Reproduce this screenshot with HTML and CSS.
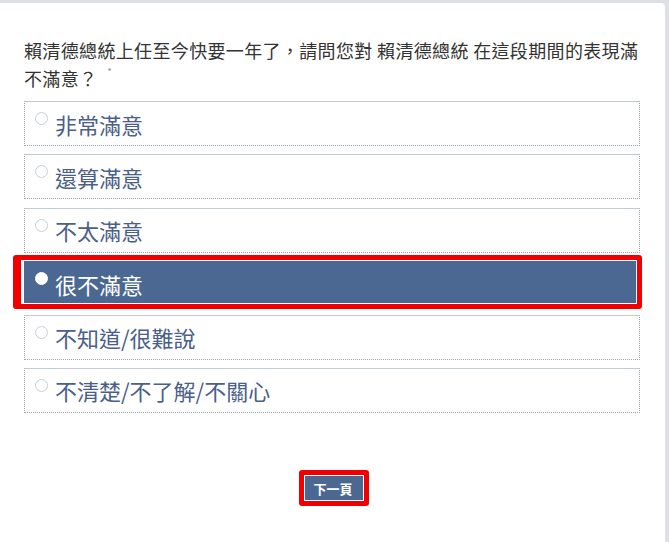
FILE: index.html
```html
<!DOCTYPE html>
<html lang="zh-Hant">
<head>
<meta charset="utf-8">
<title>問卷</title>
<link rel="stylesheet" href="styles.css">
</head>
<body>
<div class="page">
  <div class="question">賴清德總統上任至今快要一年了，請問您對 賴清德總統 在這段期間的表現滿不滿意？<span class="req">*</span></div>
  <div class="options">
    <div class="option"><span class="radio"></span><span class="label">非常滿意</span></div>
    <div class="option"><span class="radio"></span><span class="label">還算滿意</span></div>
    <div class="option"><span class="radio"></span><span class="label">不太滿意</span></div>
    <div class="option selected"><span class="radio"></span><span class="label">很不滿意</span><span class="mark mark-option"></span></div>
    <div class="option"><span class="radio"></span><span class="label">不知道/很難說</span></div>
    <div class="option"><span class="radio"></span><span class="label">不清楚/不了解/不關心</span></div>
  </div>
  <div class="actions">
    <button class="next">下一頁<span class="mark mark-button"></span></button>
  </div>
</div>
</body>
</html>
```
FILE: styles.css
```css
html, body {
  margin: 0;
  padding: 0;
  height: 100%;
}
body {
  background: #dde1e5;
  font-family: "Noto Sans CJK TC", "Noto Sans", sans-serif;
}
.page {
  box-sizing: border-box;
  margin: 3px 4px 0 0;
  height: calc(100% - 3px);
  background: #ffffff;
  border-top-right-radius: 4px;
  padding: 33px 25px 0 24px;
}
.question {
  font-size: 18px;
  line-height: 28px;
  color: #333333;
  letter-spacing: 0.35px;
  margin-right: -8px;
}
.req {
  display: inline-block;
  font-size: 9px;
  line-height: 9px;
  color: #888888;
  margin-left: 10px;
  margin-top: 3px;
  vertical-align: top;
  letter-spacing: 0;
}
.options {
  display: flex;
  flex-direction: column;
  gap: 8.4px;
  margin-top: 9px;
}
.option {
  position: relative;
  box-sizing: border-box;
  height: 45px;
  border: 1px dotted #9aa3ad;
  border-top: 1px solid #c3cbd3;
  display: flex;
  align-items: center;
  padding-left: 10px;
}
.radio {
  align-self: flex-start;
  margin-top: 10px;
  width: 11px;
  height: 11px;
  border: 1px solid #c8cfd8;
  border-radius: 50%;
  background: #fff;
  flex: none;
}
.label {
  margin-left: 7px;
  font-size: 22px;
  color: #4a6088;
  line-height: 30px;
  margin-top: 0;
}
.option.selected {
  background: #4b6893;
  border-color: #4b6893;
}
.option.selected .radio {
  background: #ffffff;
  border-color: #ffffff;
}
.option.selected .label {
  color: #ffffff;
}
.mark {
  position: absolute;
  box-sizing: border-box;
  border: 5px solid #f00000;
  border-radius: 3px;
  box-shadow: inset 0 0 0 1px #ffffff;
  pointer-events: none;
}
.mark-option {
  left: -12px;
  top: -7px;
  width: 629px;
  height: 54px;
  border-left-width: 8px;
}
.actions {
  display: flex;
  justify-content: center;
  margin-top: 62px;
  padding-left: 2px;
}
.next {
  position: relative;
  width: 59px;
  height: 27px;
  border: none;
  padding: 0;
  background: #4b6893;
  color: #ffffff;
  font-family: "Noto Sans CJK TC", sans-serif;
  font-size: 13px;
  font-weight: bold;
}
.mark-button {
  left: -5px;
  top: -5px;
  width: 70px;
  height: 36px;
}
```
